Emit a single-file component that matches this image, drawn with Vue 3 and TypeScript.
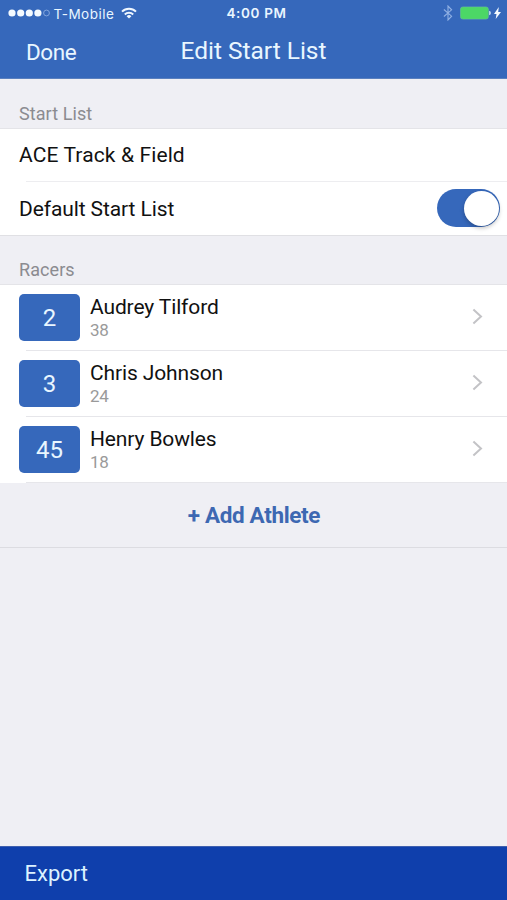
<script setup lang="ts">
import { ref } from 'vue'

interface Racer {
  bib: number
  name: string
  age: number
}

const listName = 'ACE Track & Field'
const isDefault = ref<boolean>(true)
const racers = ref<Racer[]>([
  { bib: 2, name: 'Audrey Tilford', age: 38 },
  { bib: 3, name: 'Chris Johnson', age: 24 },
  { bib: 45, name: 'Henry Bowles', age: 18 },
])
</script>

<template>
  <div class="screen">
    <header class="top">
      <div class="status">
        <div class="carrier">
          <svg class="signal" width="42" height="10" viewBox="0 0 42 10">
            <g fill="#f4faff">
              <circle cx="4" cy="5" r="3.6" />
              <circle cx="12.7" cy="5" r="3.6" />
              <circle cx="21.3" cy="5" r="3.6" />
              <circle cx="29.9" cy="5" r="3.6" />
            </g>
            <circle cx="38.5" cy="5" r="2.9" fill="none" stroke="#8aace0" stroke-width="0.9" />
          </svg>
          <span class="network">T-Mobile</span>
          <svg class="wifi" width="16" height="12" viewBox="0 0 16 12">
            <g fill="none" stroke="#eff7ff" stroke-width="2">
              <path d="M1 4.6a10 10 0 0 1 14 0" />
              <path d="M3.8 7.5a6 6 0 0 1 8.4 0" />
            </g>
            <path d="M8 11.6 5.6 9.2a3.5 3.5 0 0 1 4.8 0z" fill="#eff7ff" />
          </svg>
        </div>
        <span class="clock">4:00 PM</span>
        <div class="power">
          <svg width="10" height="16" viewBox="0 0 10 16">
            <path d="M0.9 4.5 8.6 11.2 5 15V1l3.6 3.8L0.9 11.5" fill="none" stroke="#91b1e4" stroke-width="1.1" />
          </svg>
          <svg class="battery" width="31" height="14" viewBox="0 0 31 14">
            <rect x="0.4" y="0.9" width="28" height="12.2" rx="2.4" fill="#4cd766" stroke="#68bf98" stroke-width="0.6" />
            <path d="M29.2 4.8a2.3 2.3 0 0 1 0 4.4z" fill="#d6e9fa" />
          </svg>
          <svg class="bolt" width="7" height="12" viewBox="0 0 7 12">
            <path d="M4.8 0 0 6.9h2.5L1.7 12 7 5H4.2z" fill="#f4faff" />
          </svg>
        </div>
      </div>
      <nav class="nav">
        <button class="done">Done</button>
        <h1 class="title">Edit Start List</h1>
      </nav>
    </header>

    <main class="body">
      <h2 class="label first">Start List</h2>
      <section class="group">
        <div class="row"><span class="list-name">{{ listName }}</span></div>
        <div class="row last">
          <span class="setting">Default Start List</span>
          <button class="switch" :class="{ on: isDefault }" role="switch" :aria-checked="isDefault" @click="isDefault = !isDefault">
            <span class="knob"></span>
          </button>
        </div>
      </section>

      <h2 class="label">Racers</h2>
      <section class="group racers">
        <div v-for="racer in racers" :key="racer.bib" class="racer">
          <span class="bib">{{ racer.bib }}</span>
          <div class="person">
            <span class="name">{{ racer.name }}</span>
            <span class="age">{{ racer.age }}</span>
          </div>
          <svg class="chevron" width="11" height="17" viewBox="0 0 11 17">
            <path d="M1.4 1.5 9 8.5 1.4 15.5" fill="none" stroke="#c3c3c6" stroke-width="2" />
          </svg>
        </div>
      </section>
      <button class="add">+ Add Athlete</button>
    </main>

    <footer class="bottom"><button class="export">Export</button></footer>
  </div>
</template>

<style>
body {
  background: #efeff4;
}
</style>

<style scoped>
.screen {
  display: flex;
  flex-direction: column;
  height: 900px;
  overflow: hidden;
  background: #efeff4;
  color: #111;
  font-family: Roboto, 'Liberation Sans', sans-serif;
}
.screen * {
  box-sizing: border-box;
}
button {
  margin: 0;
  padding: 0;
  border: 0;
  background: none;
  font: inherit;
  letter-spacing: inherit;
  cursor: pointer;
}
.top {
  height: 79px;
  flex: none;
  background: #3668bb;
  border-bottom: 1px solid #5a80bf;
  color: #e9f6ff;
}
.status {
  display: grid;
  grid-template-columns: 1fr auto 1fr;
  align-items: center;
  height: 26px;
  padding: 0 6px 0 8px;
  font-family: Inter, Roboto, sans-serif;
  font-size: 13.5px;
}
.carrier {
  display: flex;
  align-items: center;
}
.network {
  margin-left: 3.5px;
  padding-top: 1px;
  letter-spacing: 0.5px;
}
.wifi {
  margin-left: 7px;
}
.clock {
  padding: 0 0 0 4px;
  font-weight: 600;
  letter-spacing: 0.65px;
}
.power {
  display: flex;
  align-items: center;
  justify-content: flex-end;
}
.battery {
  margin-left: 7px;
}
.bolt {
  margin-left: 3px;
}
.nav {
  display: grid;
  grid-template-columns: 1fr auto 1fr;
  align-items: center;
  height: 50px;
  padding: 0 26px;
}
.done {
  justify-self: start;
  padding-top: 1px;
  color: inherit;
  font-size: 22.5px;
  letter-spacing: -0.4px;
}
.title {
  margin: 0;
  padding-bottom: 1px;
  font-size: 24.5px;
  font-weight: 400;
  letter-spacing: -0.02px;
}
.body {
  flex: 1;
}
.label {
  display: flex;
  align-items: flex-end;
  height: 48px;
  margin: 0;
  padding: 0 19px 4px;
  color: #8b8b90;
  font-size: 18px;
  font-weight: 400;
  line-height: 21px;
  letter-spacing: 0.08px;
}
.label.first {
  height: 49px;
}
.group {
  background: #fff;
  border-top: 1px solid #e4e4e8;
  border-bottom: 1px solid #e0e0e4;
}
.row {
  display: flex;
  align-items: center;
  justify-content: space-between;
  height: 53px;
  padding: 0 7px 2px 19px;
  background: linear-gradient(#ededf0, #ededf0) 26px 100% / 100% 1px no-repeat;
  font-size: 21px;
  letter-spacing: -0.1px;
}
.list-name {
  letter-spacing: 0.12px;
}
.row.last {
  padding-bottom: 1px;
  background: none;
}
.setting {
  padding-top: 2px;
}
.switch {
  display: flex;
  justify-content: flex-end;
  width: 63px;
  height: 38px;
  padding: 1.5px;
  border-radius: 19px;
  background: #3668bb;
}
.switch:not(.on) {
  justify-content: flex-start;
  background: #d8d8dc;
}
.knob {
  width: 35px;
  height: 35px;
  border-radius: 50%;
  background: #fff;
  box-shadow: 0 2px 4px rgba(0, 0, 0, 0.25);
}
.racers {
  border-bottom: 0;
}
.racer {
  display: flex;
  align-items: center;
  height: 66px;
  padding: 0 24px 2px 19px;
  background: linear-gradient(#e6e6ea, #e6e6ea) 26px 100% / 100% 1px no-repeat;
}
.bib {
  display: flex;
  align-items: center;
  justify-content: center;
  width: 61px;
  height: 47px;
  padding-top: 2px;
  border-radius: 5px;
  background: #3668bb;
  color: #e9f6ff;
  font-size: 24px;
}
.person {
  display: flex;
  flex: 1;
  flex-direction: column;
  margin-left: 10px;
}
.name {
  font-size: 21px;
  line-height: 25px;
  letter-spacing: -0.13px;
}
.age {
  color: #9a9a9a;
  font-size: 17px;
  line-height: 20px;
  letter-spacing: -0.2px;
}
.chevron {
  margin-bottom: 1px;
}
.add {
  display: block;
  width: 100%;
  height: 65px;
  padding-left: 1px;
  border-bottom: 1px solid #dcdce1;
  color: #3d68b2;
  font-size: 22.5px;
  font-weight: 700;
  letter-spacing: -0.35px;
}
.bottom {
  display: flex;
  align-items: center;
  height: 54px;
  padding: 0 24.5px;
  background: #0f3fac;
  border-top: 1px solid #3e5fae;
  color: #dcf2ff;
}
.export {
  color: inherit;
  font-size: 22px;
}
</style>
